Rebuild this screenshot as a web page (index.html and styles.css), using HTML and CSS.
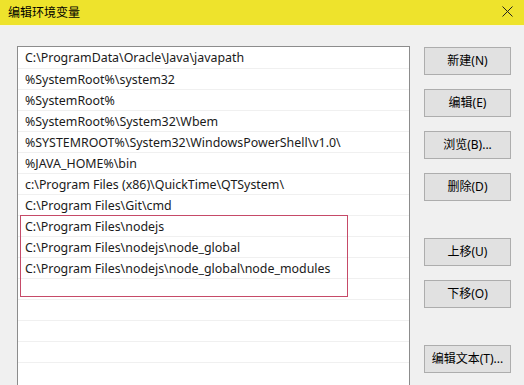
FILE: index.html
```html
<!DOCTYPE html>
<html lang="zh-CN">
<head>
<meta charset="utf-8">
<title>编辑环境变量</title>
<link rel="stylesheet" href="styles.css">
</head>
<body>
<div class="window">
  <div class="titlebar">
    <span class="title">编辑环境变量</span>
    <svg class="close" width="11" height="11" viewBox="0 0 11 11"><path d="M0.5 0.5 L10.5 10.5 M10.5 0.5 L0.5 10.5" stroke="#222" stroke-width="1" fill="none"/></svg>
  </div>
  <div class="body">
    <div class="listbox">
      <div class="row">C:\ProgramData\Oracle\Java\javapath</div>
      <div class="row">%SystemRoot%\system32</div>
      <div class="row">%SystemRoot%</div>
      <div class="row">%SystemRoot%\System32\Wbem</div>
      <div class="row">%SYSTEMROOT%\System32\WindowsPowerShell\v1.0\</div>
      <div class="row">%JAVA_HOME%\bin</div>
      <div class="row">c:\Program Files (x86)\QuickTime\QTSystem\</div>
      <div class="row">C:\Program Files\Git\cmd</div>
      <div class="row">C:\Program Files\nodejs</div>
      <div class="row">C:\Program Files\nodejs\node_global</div>
      <div class="row">C:\Program Files\nodejs\node_global\node_modules</div>
      <div class="row"></div>
      <div class="row"></div>
      <div class="row"></div>
      <div class="row"></div>
      <div class="row"></div>
      <div class="highlight"></div>
    </div>
    <div class="buttons">
      <button class="btn">新建(N)</button>
      <button class="btn">编辑(E)</button>
      <button class="btn">浏览(B)...</button>
      <button class="btn">删除(D)</button>
      <button class="btn gap-lg">上移(U)</button>
      <button class="btn">下移(O)</button>
      <button class="btn gap-lg">编辑文本(T)...</button>
    </div>
  </div>
</div>
</body>
</html>
```
FILE: styles.css
```css
html, body {
  margin: 0;
  padding: 0;
  overflow: hidden;
}
body {
  width: 524px;
  height: 385px;
  background: #f0f0f0;
  font-family: "Noto Sans", "Noto Sans CJK SC", sans-serif;
  font-size: 12px;
  color: #000;
}
.window {
  width: 524px;
  height: 385px;
  overflow: hidden;
}
.titlebar {
  height: 26px;
  background: #eee32c;
  display: flex;
  align-items: center;
  justify-content: space-between;
  padding: 0 11px 0 8px;
  box-sizing: border-box;
  border-bottom: 1px solid #f6f4e0;
}
.title {
  font-family: "Noto Sans CJK SC", sans-serif;
  font-size: 12px;
  line-height: 16px;
  margin-top: -2px;
}
.close {
  margin-top: -3px;
}
.body {
  display: flex;
  align-items: flex-start;
  padding: 20px 0 0 17px;
}
.listbox {
  position: relative;
  width: 393px;
  height: 400px;
  box-sizing: border-box;
  border: 1px solid #8c8c8c;
  border-bottom: none;
  background: #fff;
  flex: none;
}
.row {
  height: 21px;
  box-sizing: border-box;
  border-top: 1px solid #f0f0f0;
  padding: 1px 0 0 7px;
  font-size: 12.4px;
  line-height: 20px;
  white-space: nowrap;
  overflow: visible;
  color: #1a1a1a;
}
.row:first-child {
  border-top: none;
}
.highlight {
  position: absolute;
  left: 2px;
  top: 168px;
  width: 328px;
  height: 82px;
  box-sizing: border-box;
  border: 1px solid #c64a68;
}
.buttons {
  display: flex;
  flex-direction: column;
  gap: 14px;
  margin-left: 14px;
  margin-top: 1px;
}
.btn {
  width: 87px;
  height: 28px;
  box-sizing: border-box;
  background: #e1e1e1;
  border: 1px solid #adadad;
  font-family: "Noto Sans", "Noto Sans CJK SC", sans-serif;
  font-size: 12px;
  color: #000;
  padding: 0;
  line-height: 26px;
}
.btn.gap-lg {
  margin-top: 23px;
}
```
